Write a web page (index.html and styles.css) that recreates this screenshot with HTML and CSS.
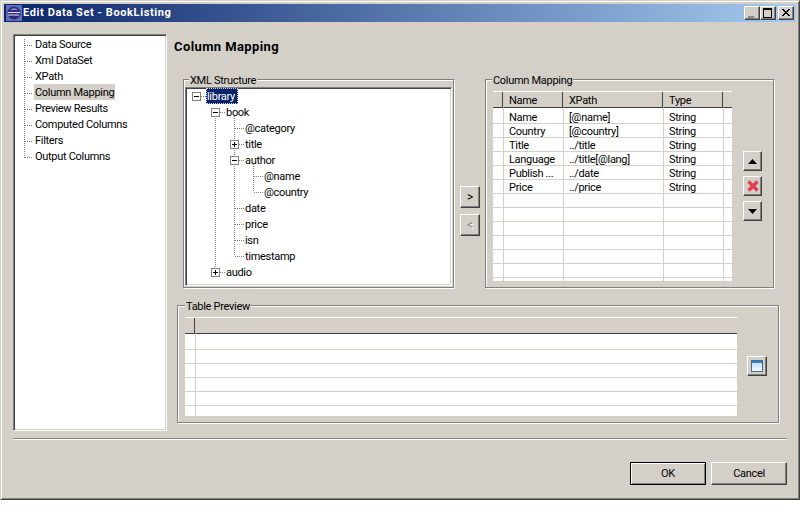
FILE: index.html
```html
<!DOCTYPE html>
<html lang="en">
<head>
<meta charset="utf-8">
<title>Edit Data Set - BookListing</title>
<link rel="stylesheet" href="styles.css">
</head>
<body>
<div class="window">
  <header class="titlebar">
    <svg class="app-icon" width="16" height="16" viewBox="0 0 16 16">
      <rect width="16" height="16" fill="#5c6fb8"/>
      <circle cx="8" cy="8" r="6.500" fill="#2f2a7c"/>
      <path d="M2 7h12v1h-12zM2 9.500h11v1h-11z" fill="#e8e8f8"/>
      <path d="M4 5a5.500 5.500 0 0 1 8 0z" fill="#8f8cd0"/>
    </svg>
    <span class="title-text">Edit Data Set - BookListing</span>
    <div class="win-buttons">
      <button class="win-btn"><svg width="14" height="12" viewBox="0 0 14 12"><rect x="3" y="9" width="6" height="2" fill="#8a8a8a"/></svg></button>
      <button class="win-btn"><svg width="14" height="12" viewBox="0 0 14 12"><path d="M2 1.500h9M2 2.500h9M2.500 2v8M10.500 2v8M2 10.500h9" stroke="#000" fill="none"/></svg></button>
      <button class="win-btn win-close"><svg width="14" height="12" viewBox="0 0 14 12"><path d="M3 2l7 7M4 2l7 7M10 2l-7 7M11 2l-7 7" stroke="#000" fill="none"/></svg></button>
    </div>
  </header>

  <div class="main">
    <nav class="nav sunken">
      <svg class="guides" width="40" height="130" viewBox="0 0 40 130">
        <path d="M10.500 3V122M11 9.500h8M11 25.500h8M11 41.500h8M11 57.500h8M11 73.500h8M11 89.500h8M11 105.500h8M11 121.500h8" />
      </svg>
      <div class="nav-row"><span class="nav-text">Data Source</span></div>
      <div class="nav-row"><span class="nav-text">Xml DataSet</span></div>
      <div class="nav-row"><span class="nav-text">XPath</span></div>
      <div class="nav-row"><span class="nav-text nav-current">Column Mapping</span></div>
      <div class="nav-row"><span class="nav-text">Preview Results</span></div>
      <div class="nav-row"><span class="nav-text">Computed Columns</span></div>
      <div class="nav-row"><span class="nav-text">Filters</span></div>
      <div class="nav-row"><span class="nav-text">Output Columns</span></div>
    </nav>

    <section class="page">
      <h1 class="page-title">Column Mapping</h1>

      <div class="top-row">
        <div class="group group-xml">
          <div class="group-label">XML Structure</div>
          <div class="tree sunken">
            <svg class="guides" width="150" height="198" viewBox="0 0 150 198">
              <path d="M15 8.500h5M34 24.500h5M29.500 28V184M34 184.500h5M48.500 28V168M49 40.500h9M53 56.500h5M53 72.500h5M49 120.500h9M49 136.500h9M49 152.500h9M49 168.500h9M67.500 76V104M68 88.500h9M68 104.500h9"/>
              <g class="box">
                <rect x="6.500" y="4.500" width="8" height="8"/><path d="M8 8.500h5"/>
                <rect x="25.500" y="20.500" width="8" height="8"/><path d="M27 24.500h5"/>
                <rect x="44.500" y="52.500" width="8" height="8"/><path d="M46 56.500h5M48.500 54v5"/>
                <rect x="44.500" y="68.500" width="8" height="8"/><path d="M46 72.500h5"/>
                <rect x="25.500" y="180.500" width="8" height="8"/><path d="M27 184.500h5M29.500 182v5"/>
              </g>
            </svg>
            <div class="tree-row d0"><span class="tree-text tree-current">library</span></div>
            <div class="tree-row d1"><span class="tree-text">book</span></div>
            <div class="tree-row d2"><span class="tree-text">@category</span></div>
            <div class="tree-row d2"><span class="tree-text">title</span></div>
            <div class="tree-row d2"><span class="tree-text">author</span></div>
            <div class="tree-row d3"><span class="tree-text">@name</span></div>
            <div class="tree-row d3"><span class="tree-text">@country</span></div>
            <div class="tree-row d2"><span class="tree-text">date</span></div>
            <div class="tree-row d2"><span class="tree-text">price</span></div>
            <div class="tree-row d2"><span class="tree-text">isn</span></div>
            <div class="tree-row d2"><span class="tree-text">timestamp</span></div>
            <div class="tree-row d1"><span class="tree-text">audio</span></div>
          </div>
        </div>

        <div class="move-buttons">
          <button class="btn move-btn">&gt;</button>
          <button class="btn move-btn move-disabled">&lt;</button>
        </div>

        <div class="group group-map">
          <div class="group-label">Column Mapping</div>
          <div class="map-row">
            <div class="grid grid-map">
              <table>
                <colgroup><col class="c-sel"><col class="c-name"><col class="c-xpath"><col class="c-type"><col></colgroup>
                <thead><tr><th></th><th>Name</th><th>XPath</th><th>Type</th><th class="th-fill"></th></tr></thead>
                <tbody>
                  <tr class="first"><td></td><td>Name</td><td>[@name]</td><td>String</td><td></td></tr>
                  <tr><td></td><td>Country</td><td>[@country]</td><td>String</td><td></td></tr>
                  <tr><td></td><td>Title</td><td>../title</td><td>String</td><td></td></tr>
                  <tr><td></td><td>Language</td><td>../title[@lang]</td><td>String</td><td></td></tr>
                  <tr><td></td><td>Publish ...</td><td>../date</td><td>String</td><td></td></tr>
                  <tr><td></td><td>Price</td><td>../price</td><td>String</td><td></td></tr>
                  <tr><td></td><td></td><td></td><td></td><td></td></tr>
                  <tr><td></td><td></td><td></td><td></td><td></td></tr>
                  <tr><td></td><td></td><td></td><td></td><td></td></tr>
                  <tr><td></td><td></td><td></td><td></td><td></td></tr>
                  <tr><td></td><td></td><td></td><td></td><td></td></tr>
                  <tr><td></td><td></td><td></td><td></td><td></td></tr>
                  <tr><td></td><td></td><td></td><td></td><td></td></tr>
                </tbody>
              </table>
            </div>
            <div class="side-buttons">
              <button class="btn icon-btn"><svg width="9" height="5" viewBox="0 0 9 5"><path d="M4.500 0L9 5H0z" fill="#000"/></svg></button>
              <button class="btn icon-btn"><svg width="14" height="14" viewBox="0 0 14 14"><path d="M2.500 2.500l9 9M11.500 2.500l-9 9" stroke="#e23c50" stroke-width="3.200" fill="none"/></svg></button>
              <button class="btn icon-btn"><svg width="9" height="5" viewBox="0 0 9 5"><path d="M0 0h9L4.500 5z" fill="#000"/></svg></button>
            </div>
          </div>
        </div>
      </div>

      <div class="group group-preview">
        <div class="group-label">Table Preview</div>
        <div class="preview-row">
          <div class="grid grid-preview">
            <table>
              <colgroup><col class="c-sel"><col></colgroup>
              <thead><tr><th></th><th class="th-fill"></th></tr></thead>
              <tbody>
                <tr class="first"><td></td><td></td></tr>
                <tr><td></td><td></td></tr>
                <tr><td></td><td></td></tr>
                <tr><td></td><td></td></tr>
                <tr><td></td><td></td></tr>
                <tr><td></td><td></td></tr>
              </tbody>
            </table>
          </div>
          <button class="btn preview-btn"><svg width="14" height="14" viewBox="0 0 14 14">
            <defs><linearGradient id="pane" x1="0" y1="0" x2="0" y2="1"><stop offset="0" stop-color="#b5d8f5"/><stop offset="1" stop-color="#f4f9fd"/></linearGradient></defs>
            <rect x="1.500" y="1.500" width="11" height="11" fill="url(#pane)" stroke="#4a6a8c"/>
            <rect x="2" y="2" width="10" height="2" fill="#2f7fd0"/>
          </svg></button>
        </div>
      </div>
    </section>
  </div>

  <footer class="footer">
    <div class="separator"></div>
    <div class="dialog-buttons">
      <button class="btn dialog-btn dialog-default">OK</button>
      <button class="btn dialog-btn">Cancel</button>
    </div>
  </footer>
</div>
</body>
</html>
```

FILE: styles.css
```css
* { box-sizing: border-box; }
html, body { margin: 0; padding: 0; background: #fff; }
body { font: 11px/14px Roboto, "Liberation Sans", sans-serif; letter-spacing: -0.3px; color: #000; }

.window {
  width: 800px;
  height: 500px;
  padding: 3px 3px 0 3px;
  background: #d4d0c8;
  border: 1px solid;
  border-color: #d4d0c8 #404040 #404040 #d4d0c8;
  box-shadow: inset 1px 1px 0 #fff, inset -1px -1px 0 #808080;
  display: flex;
  flex-direction: column;
}

/* title bar */
.titlebar {
  height: 18px;
  flex: none;
  display: flex;
  align-items: center;
  padding: 0 2px;
  background: linear-gradient(90deg, #0a246a, #a6caf0);
  color: #fff;
}
.app-icon { flex: none; }
.title-text { margin-left: 1px; font-weight: 700; font-size: 11px; letter-spacing: 0.6px; }
.win-buttons { margin-left: auto; display: flex; }
.win-btn {
  width: 16px;
  height: 14px;
  padding: 0;
  display: flex;
  align-items: center;
  justify-content: center;
  background: #d4d0c8;
  border: 1px solid;
  border-color: #fff #404040 #404040 #fff;
  box-shadow: inset -1px -1px 0 #808080;
}
.win-close { margin-left: 2px; }

/* shared */
.sunken {
  background: #fff;
  border: 1px solid;
  border-color: #808080 #fff #fff #808080;
  box-shadow: inset 1px 1px 0 #404040, inset -1px -1px 0 #d4d0c8;
  position: relative;
}
.guides { position: absolute; left: 0; top: 0; pointer-events: none; }
.guides path { stroke: #808080; stroke-dasharray: 1 1; fill: none; }
.guides .box rect { fill: #fff; stroke: #808080; }
.guides .box path { stroke: #000; stroke-dasharray: none; }

.btn {
  padding: 0;
  font: inherit;
  letter-spacing: inherit;
  color: #000;
  background: #d4d0c8;
  border: 1px solid;
  border-color: #fff #404040 #404040 #fff;
  box-shadow: inset -1px -1px 0 #808080;
  display: flex;
  align-items: center;
  justify-content: center;
}

/* layout */
.main { display: flex; padding-left: 9px; flex: none; }

.nav { width: 154px; height: 397px; margin-top: 12px; padding: 1px 0 0 1px; flex: none; }
.nav .guides { left: 0; top: 1px; }
.nav-row { height: 16px; padding-left: 19px; display: flex; align-items: center; }
.nav-text { padding: 0 1px; height: 16px; line-height: 18px; white-space: nowrap; }
.nav-current { background: #d4d0c8; }

.page { margin-left: 7px; flex: none; width: 610px; }
.page-title { margin: 17px 0 0; font-size: 13px; line-height: 16px; font-weight: 700; letter-spacing: 0.4px; }

.top-row { display: flex; margin: 24px 0 0 9px; height: 209px; }

.group {
  border: 1px solid #808080;
  box-shadow: inset 1px 1px 0 #fff, 1px 1px 0 #fff;
}
.group-label {
  width: fit-content;
  margin: -7px 0 0 0;
  padding: 0 1px;
  height: 14px;
  line-height: 16px;
  background: #d4d0c8;
  white-space: nowrap;
}
.group-xml { width: 271px; height: 209px; flex: none; padding-left: 1px; }
.group-xml .group-label { margin-left: 4px; }
.tree { width: 267px; height: 199px; }
.tree-row { height: 16px; display: flex; align-items: center; }
.tree-text { padding: 0 1px; height: 16px; line-height: 18px; white-space: nowrap; }
.d0 { padding-left: 20px; }
.d1 { padding-left: 39px; }
.d2 { padding-left: 58px; }
.d3 { padding-left: 77px; }
.tree-current { padding-right: 3px; background: #0a246a; color: #fff; outline: 1px dotted #d4d0c8; outline-offset: -1px; }

.move-buttons { margin: 107px 5px 0 6px; display: flex; flex-direction: column; gap: 6px; flex: none; }
.move-btn { width: 20px; height: 22px; font-size: 12px; }
.move-disabled { color: #808080; text-shadow: 1px 1px 0 #fff; }

.group-map { width: 289px; height: 209px; flex: none; padding-left: 7px; }
.group-map .group-label { margin-left: -1px; }
.map-row { display: flex; margin-top: 4px; }
.grid { background: #fff; overflow: hidden; flex: none; }
.grid table { border-collapse: separate; border-spacing: 0; table-layout: fixed; width: 100%; }
.grid-map { width: 239px; height: 190px; }
.grid-preview { width: 552px; height: 99px; }
.c-sel { width: 11px; }
.c-name { width: 60px; }
.c-xpath { width: 100px; }
.c-type { width: 60px; }

th {
  height: 17px;
  padding: 2px 0 0 5px;
  font-weight: 400;
  text-align: left;
  background: #d4d0c8;
  border-top: 1px solid #fff;
  border-bottom: 1px solid #404040;
  border-right: 1px solid #d4d0c8;
  box-shadow: inset -1px 0 0 #404040;
  line-height: 13px;
}
th.th-fill { box-shadow: none; border-right: 0; }
td {
  height: 14px;
  padding: 2px 0 0 5px;
  border-right: 1px solid #d4d0c8;
  border-bottom: 1px solid #d4d0c8;
  vertical-align: top;
  line-height: 11px;
  white-space: nowrap;
  overflow: hidden;
}
tr.first td { height: 16px; padding-top: 4px; }
td:last-child { border-right: 0; }

.side-buttons { margin: 60px 0 0 11px; display: flex; flex-direction: column; gap: 5px; flex: none; }
.icon-btn { width: 19px; height: 20px; }

.group-preview { margin: 17px 0 0 3px; width: 602px; height: 118px; padding-left: 7px; }
.preview-row { display: flex; margin-top: 4px; }
.preview-btn { width: 20px; height: 20px; margin: 39px 0 0 10px; flex: none; }

/* footer */
.footer { padding: 0 9px; flex: none; }
.separator { margin-top: 7px; height: 2px; border-top: 1px solid #808080; border-bottom: 1px solid #fff; }
.dialog-buttons { margin-top: 22px; display: flex; justify-content: flex-end; gap: 5px; }
.dialog-btn { width: 76px; height: 23px; }
.dialog-default { border-color: #000; box-shadow: inset 1px 1px 0 #fff, inset -1px -1px 0 #808080; }
```
